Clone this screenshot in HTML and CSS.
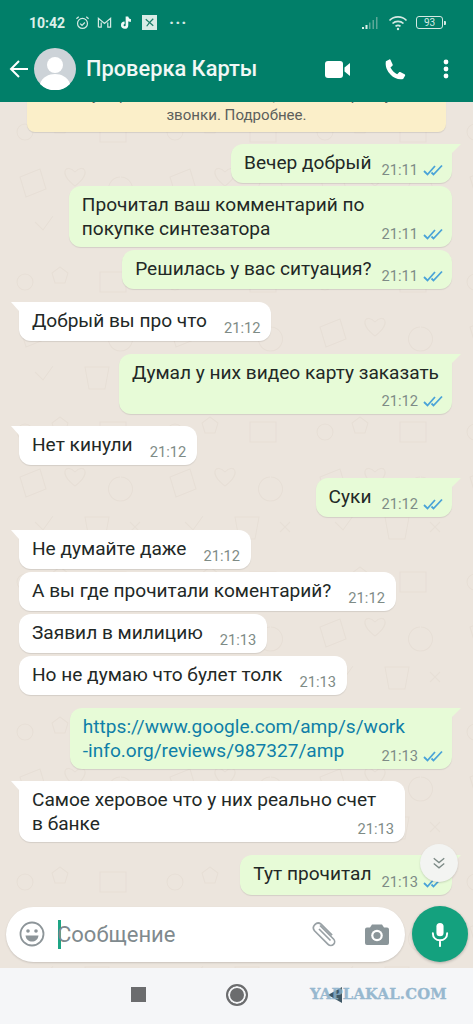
FILE: index.html
```html
<!DOCTYPE html>
<html lang="ru">
<head>
<meta charset="utf-8">
<title>Проверка Карты</title>
<link rel="stylesheet" href="styles.css">
</head>
<body>
<div class="app">
  <header class="top">
    <div class="status">
      <span class="clock">10:42</span>
      <svg class="si alarm" viewBox="0 0 16 16"><circle cx="8" cy="9" r="5.3"/><path d="M5.5 9.2 7.5 11 10.5 8M1.5 4 4 1.8M14.5 4 12 1.8"/></svg>
      <svg class="si gm" viewBox="0 0 16 16"><path d="M1.5 13V3.5L8 9l6.5-5.5V13h-3V8M1.500 13h3V8"/></svg>
      <svg class="si tt" viewBox="0 0 16 16"><path d="M8.500 1.500v9.300a2.500 2.500 0 1 1-2.500-2.500M8.500 2c.3 2.500 1.800 3.800 4.200 4"/></svg>
      <span class="boxicon"><svg viewBox="0 0 16 16"><path d="M4 4.500 8 8l-3 4M12 4 8 8l4 3.500"/></svg></span>
      <span class="more">···</span>
      <span class="grow"></span>
      <svg class="signal" viewBox="0 0 18 14"><rect x="0" y="11" width="2" height="2"/><rect x="3.500" y="9" width="2" height="4"/><rect x="7" y="6.500" width="1.500" height="6.500" class="dim"/><rect x="10.500" y="4" width="1.500" height="9" class="dim"/><rect x="14" y="1" width="1.500" height="12" class="dim"/></svg>
      <svg class="si wifi" viewBox="0 0 20 16"><path d="M1.500 5.500a12 12 0 0 1 17 0M4.500 8.500a8 8 0 0 1 11 0M7.500 11.300a4 4 0 0 1 5 0"/><circle cx="10" cy="14" r="1.200"/></svg>
      <span class="battery">93</span><span class="nub"></span>
    </div>
    <div class="bar">
      <svg class="back" viewBox="0 0 20 20"><path d="M19 10H2M10 2l-8 8 8 8"/></svg>
      <svg class="avatar" viewBox="0 0 42 42"><circle cx="21" cy="21" r="21" fill="#cdd3d8"/><circle cx="21" cy="17" r="8" fill="#fff"/><path d="M6 36c2-7 9-10 15-10s13 3 15 10a21 21 0 0 1-30 0z" fill="#fff"/></svg>
      <h1 class="name">Проверка Карты</h1>
      <svg class="video" viewBox="0 0 25 17"><rect x="0" y="0" width="18" height="17" rx="3"/><path d="M19.500 6.500 25 2v13l-5.500-4.500z"/></svg>
      <svg class="phone" viewBox="0 0 24 24"><path d="M6.600 1.500 3 3.500C2 9 4.500 14 8 17.500s8 5.500 13 4.500l2-3.600c.3-.6 0-1.200-.5-1.500l-4.500-2.200c-.5-.2-1-.1-1.400.3l-1.800 2c-3-1.300-5.500-4-7-7l2-1.800c.4-.4.500-.9.300-1.400L7.900 2c-.2-.6-.8-.8-1.300-.5z"/></svg>
      <svg class="dots" viewBox="0 0 6 20"><circle cx="3" cy="3" r="2.400"/><circle cx="3" cy="10" r="2.400"/><circle cx="3" cy="17" r="2.400"/></svg>
    </div>
  </header>

  <div class="pane">
    <main class="chat">
      <div class="notice">не могут прочитать ваши сообщения или прослушать<br>звонки. Подробнее.</div>

      <div class="msg out tail first"><span class="txt">Вечер добрый</span><span class="meta">21:11 <svg class="ticks" viewBox="0 0 20 12"><path d="M1 7l3.500 3.500L12 2M8.500 8.500l2 2L19 1.500"/></svg></span></div>
      <div class="msg out wide"><span class="txt">Прочитал ваш комментарий по<br>покупке синтезатора</span><span class="meta">21:11 <svg class="ticks" viewBox="0 0 20 12"><path d="M1 7l3.500 3.500L12 2M8.500 8.500l2 2L19 1.500"/></svg></span></div>
      <div class="msg out"><span class="txt">Решилась у вас ситуация?</span><span class="meta">21:11 <svg class="ticks" viewBox="0 0 20 12"><path d="M1 7l3.500 3.500L12 2M8.500 8.500l2 2L19 1.500"/></svg></span></div>

      <div class="msg in tail first"><span class="txt">Добрый вы про что</span><span class="meta">21:12</span></div>

      <div class="msg out tail first stack"><span class="txt">Думал у них видео карту заказать</span><span class="meta">21:12 <svg class="ticks" viewBox="0 0 20 12"><path d="M1 7l3.500 3.500L12 2M8.500 8.500l2 2L19 1.500"/></svg></span></div>

      <div class="msg in tail first"><span class="txt">Нет кинули</span><span class="meta">21:12</span></div>

      <div class="msg out tail first"><span class="txt">Суки</span><span class="meta">21:12 <svg class="ticks" viewBox="0 0 20 12"><path d="M1 7l3.500 3.500L12 2M8.500 8.500l2 2L19 1.500"/></svg></span></div>

      <div class="msg in tail first"><span class="txt">Не думайте даже</span><span class="meta">21:12</span></div>
      <div class="msg in"><span class="txt">А вы где прочитали коментарий?</span><span class="meta">21:12</span></div>
      <div class="msg in"><span class="txt">Заявил в милицию</span><span class="meta">21:13</span></div>
      <div class="msg in"><span class="txt">Но не думаю что булет толк</span><span class="meta">21:13</span></div>

      <div class="msg out tail first stack tight"><span class="txt link">https://www.google.com/amp/s/work<br>-info.org/reviews/987327/amp</span><span class="meta">21:13 <svg class="ticks" viewBox="0 0 20 12"><path d="M1 7l3.500 3.500L12 2M8.500 8.500l2 2L19 1.500"/></svg></span></div>

      <div class="msg in tail first stack tight"><span class="txt">Самое херовое что у них реально счет<br>в банке</span><span class="meta">21:13</span></div>

      <div class="msg out tail first last"><span class="txt">Тут прочитал</span><span class="meta">21:13 <svg class="ticks" viewBox="0 0 20 12"><path d="M1 7l3.500 3.500L12 2M8.500 8.500l2 2L19 1.500"/></svg></span></div>

      <div class="jump"><svg viewBox="0 0 16 16"><path d="M2 2.500l6 5 6-5M2 8.500l6 5 6-5"/></svg></div>
    </main>

    <div class="composer">
      <div class="field">
        <svg class="emoji" viewBox="0 0 26 26"><circle cx="13" cy="13" r="11.500"/><circle cx="9" cy="10" r="1.800" class="fill"/><circle cx="17" cy="10" r="1.800" class="fill"/><path d="M6.500 14.500h13c-.5 4-3.300 6-6.500 6s-6-2-6.500-6z" class="fill"/></svg>
        <span class="caret"></span>
        <span class="placeholder">Сообщение</span>
        <svg class="clip" viewBox="0 0 26 26"><path d="M9 4.500 22.500 18a3.800 3.800 0 0 1-5.400 5.400L3.500 9.800a4.700 4.700 0 0 1 6.600-6.600l11 11M8 8l11.500 11.500"/></svg>
        <svg class="cam" viewBox="0 0 24 22"><path d="M7 1.500h10l2 3h3a2 2 0 0 1 2 2V20a2 2 0 0 1-2 2H2a2 2 0 0 1-2-2V6.500a2 2 0 0 1 2-2h3z"/><circle cx="12" cy="12.500" r="5.800" fill="#fff"/><circle cx="12" cy="12.500" r="3.600"/></svg>
      </div>
      <div class="mic"><svg viewBox="0 0 20 28"><rect x="6" y="1" width="8" height="15" rx="4" fill="#fff"/><path d="M2 12.500c0 5 3.500 8 8 8s8-3 8-8M10 20.500V27" fill="none" stroke="#fff" stroke-width="2.200" stroke-linecap="round"/></svg></div>
    </div>
  </div>

  <nav class="nav">
    <span class="square"></span>
    <span class="home"></span>
    <span class="tri"></span>
    <span class="mark">YAPLAKAL.COM</span>
  </nav>
</div>
</body>
</html>
```
FILE: styles.css
```css
* { box-sizing: border-box; }
html, body { margin: 0; height: 100%; }
body { font-family: Roboto, "Noto Sans", sans-serif; background: #ece5dd; }
.app { width: 473px; height: 1024px; display: flex; flex-direction: column; overflow: hidden; }

.top { height: 102px; flex: none; background: #017f69; color: #fff; position: relative; z-index: 2; }
.status { height: 44px; display: flex; align-items: center; padding: 1px 27px 0 29px; }
.clock { font-size: 14px; font-weight: 700; color: #dcefe9; width: 46px; }
.si { fill: none; stroke: #d5e9e3; stroke-width: 1.300; width: 15px; height: 15px; margin-right: 7px; }
.tt { stroke-width: 2.800; stroke: #f2faf8; margin-right: 5px; }
.gm { margin-right: 7px; }
.boxicon { width: 15px; height: 15px; background: #d9ece6; margin-left: 3px; margin-right: 12px; display: flex; }
.boxicon svg { width: 15px; height: 15px; fill: none; stroke: #1c7d68; stroke-width: 1.300; }
.more { font-size: 17px; font-weight: 700; letter-spacing: 1px; color: #d5e9e3; line-height: 10px; }
.grow { flex: 1; }
.signal { width: 18px; height: 14px; fill: #dcefe9; margin-right: 8px; }
.signal .dim { fill: #5da898; }
.wifi { width: 20px; height: 16px; margin-right: 8px; stroke-width: 1.700; }
.wifi circle { fill: #d5e9e3; stroke: none; }
.battery { width: 27px; height: 13px; border: 1px solid #d5e9e3; border-radius: 3px; font-size: 10px; line-height: 11px; text-align: center; color: #d5e9e3; }
.nub { width: 2px; height: 4px; margin-left: 1px; background: #d5e9e3; border-radius: 0 1px 1px 0; }

.bar { height: 58px; display: flex; align-items: center; padding: 0 24px 4px 9px; margin-top: -2px; }
.back { width: 20px; height: 20px; fill: none; stroke: #fff; stroke-width: 2; flex: none; margin-right: 5px; }
.avatar { width: 42px; height: 42px; flex: none; margin-right: 10px; }
.name { margin: 0; font-size: 21.800px; font-weight: 500; line-height: 26px; flex: 1; color: #f1f8f6; white-space: nowrap; }
.video { width: 25px; height: 17px; fill: #fff; margin-right: 33px; flex: none; }
.phone { width: 23px; height: 23px; fill: #fff; margin-right: 37px; flex: none; }
.dots { width: 6px; height: 20px; fill: #fff; flex: none; }

.pane {
  flex: 1; min-height: 0; display: flex; flex-direction: column;
  background-color: #ece5dd;
  background-image: url("data:image/svg+xml,%3Csvg xmlns='http://www.w3.org/2000/svg' width='150' height='150' fill='none' stroke='%23e7dfd6' stroke-width='1.100'%3E%3Ccircle cx='25' cy='30' r='8'/%3E%3Cpath d='M60 15l8 6-3 10H55l-3-10zM100 20h26v20h-26zM20 75l20-8 6 20-20 8zM75 70c8-9 18 0 0 14-18-14-8-23 0-14zM120 75a12 12 0 1 0 1 0M35 120l8 8 10-14M85 115h24l-4 22H89zM130 120l10 10M140 120l-10 10'/%3E%3C/svg%3E");
}
.chat {
  flex: 1; min-height: 0; position: relative; overflow: hidden;
  display: flex; flex-direction: column; justify-content: flex-end; align-items: flex-start;
  padding-bottom: 11px;
}

.notice {
  align-self: center; width: 419px; flex: none; margin-bottom: 12px; padding: 0 14px 7px;
  background: #fbefc9; border-radius: 8px; text-align: center;
  font-size: 15.100px; line-height: 20px; color: #5d5f5c;
  box-shadow: 0 1px 1px rgba(0,0,0,.1);
}

.msg {
  position: relative; display: flex; align-items: flex-end; min-height: 39px; flex: none;
  margin-top: 3px; padding: 0 9px 0 13px; border-radius: 12px;
  box-shadow: 0 1px 1px rgba(0,0,0,.1);
  font-size: 19.100px; color: #222826;
}
.msg.first { margin-top: 12.750px; }
.notice + .msg { margin-top: 0; }
.out { align-self: flex-end; margin-right: 21px; background: #e7fbd7; }
.in { align-self: flex-start; margin-left: 19px; background: #fff; padding-right: 11px; }
.tail.out { border-top-right-radius: 0; }
.tail.in { border-top-left-radius: 0; }
.tail::before { content: ""; position: absolute; top: 0; width: 0; height: 0; border-style: solid; }
.tail.out::before { left: 100%; border-width: 9px 9px 0 0; border-color: #e7fbd7 transparent transparent transparent; }
.tail.in::before { right: 100%; border-width: 9px 0 0 8px; border-color: #fff transparent transparent transparent; }

.txt { padding: 7px 0 6px; line-height: 24px; align-self: flex-start; white-space: nowrap; }
.meta { display: inline-flex; align-items: center; gap: 5px; margin-left: 10px; padding-bottom: 5px; font-size: 14.700px; line-height: 16px; color: #7e8b86; white-space: nowrap; flex: none; }
.in .meta, .wide .meta { margin-left: 17px; }
.ticks { width: 20px; height: 12px; fill: none; stroke: #4aa3d8; stroke-width: 1.800; }

.stack { flex-direction: column; align-items: stretch; padding-right: 13px; }
.stack .meta { align-self: flex-end; margin-top: 2px; margin-right: -4px; }
.stack.tight .meta { margin-top: -21px; }
.out.tight { padding-right: 47px; }
.out.tight .meta { margin-right: -38px; }
.in.tight { padding-right: 29px; }
.in.tight .meta { margin-right: -18px; }
.link { color: #0f7fa8; }
.last { min-height: 40px; }

.jump {
  position: absolute; right: 15px; bottom: 24px; width: 38px; height: 38px; border-radius: 50%;
  background: #f3f4f2; box-shadow: 0 1px 2px rgba(0,0,0,.15);
  display: flex; align-items: center; justify-content: center;
}
.jump svg { width: 14px; height: 14px; fill: none; stroke: #7c8a86; stroke-width: 1.500; }

.composer {
  flex: none; height: 62px; padding: 0 5px 6px 6px;
  display: flex; align-items: center; gap: 7px;
}
.field {
  width: 399px; height: 55px; border-radius: 28px; background: #fff; flex: none;
  box-shadow: 0 1px 2px rgba(0,0,0,.15);
  display: flex; align-items: center; padding: 0 16px 0 13px;
}
.emoji { width: 26px; height: 26px; fill: none; stroke: #8d9599; stroke-width: 1.800; flex: none; }
.emoji .fill { fill: #8d9599; stroke: none; }
.caret { width: 3px; height: 29px; background: #1ea585; margin-left: 13px; flex: none; }
.placeholder { font-size: 22px; color: #7f8a8e; flex: 1; margin-left: -4px; }
.clip { width: 26px; height: 26px; fill: none; stroke: #99a1a5; stroke-width: 1.700; margin-right: 28px; flex: none; }
.cam { width: 24px; height: 22px; fill: #8a9599; flex: none; }
.mic { width: 56px; height: 56px; border-radius: 50%; background: #14a17e; box-shadow: 0 1px 3px rgba(0,0,0,.25); display: flex; align-items: center; justify-content: center; flex: none; }
.mic svg { width: 18px; height: 25px; }

.nav { height: 56px; flex: none; background: #f5f6f8; position: relative; display: flex; align-items: center; justify-content: center; gap: 80px; padding: 0 0 3px 0; }
.square { width: 15px; height: 15px; background: #6b6c6e; }
.home { width: 22px; height: 22px; border-radius: 50%; background: #6b6c6e; border: 2px solid #6b6c6e; box-shadow: inset 0 0 0 2px #f5f6f8; }
.tri { width: 0; height: 0; border-style: solid; border-width: 8px 14px 8px 0; border-color: transparent #3f5866 transparent transparent; }
.mark { position: absolute; left: 310px; top: 17px; font-family: "DejaVu Serif", serif; font-weight: 700; font-size: 14.800px; line-height: 18px; color: #87aec9; opacity: .85; letter-spacing: .2px; -webkit-text-stroke: .3px #87aec9; }
```
